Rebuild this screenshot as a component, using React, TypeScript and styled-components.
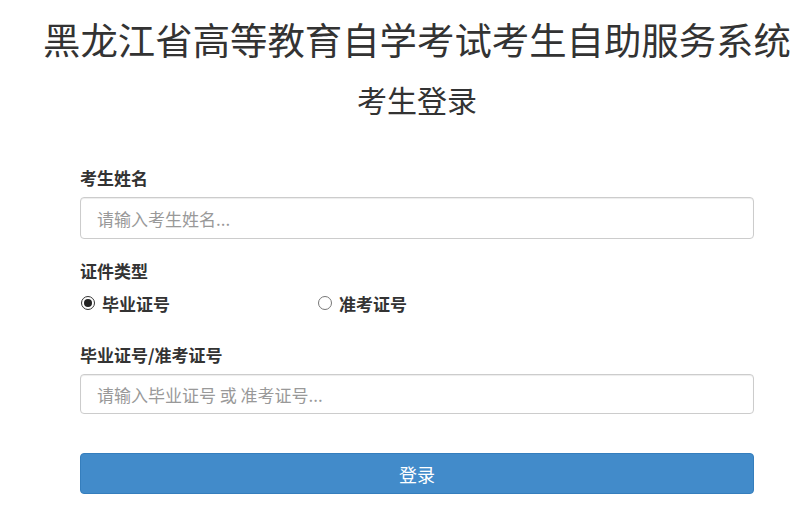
import React, { useState } from "react";
import styled, { createGlobalStyle } from "styled-components";

const GlobalStyle = createGlobalStyle`
  html, body {
    margin: 0;
    padding: 0;
    background: #fff;
  }
  body {
    font-family: "Noto Sans CJK SC", "Noto Sans", "Liberation Sans", sans-serif;
    color: #333;
    font-size: 14px;
  }
  * {
    box-sizing: border-box;
  }
`;

const Page = styled.div`
  display: flex;
  flex-direction: column;
  align-items: center;
  padding: 19px 0 0 34px;
`;

const Title = styled.h1`
  margin: 0;
  font-size: 37.4px;
  font-weight: 400;
  line-height: 40px;
  white-space: nowrap;
`;

const SubTitle = styled.h3`
  margin: 22px 0 0;
  font-size: 30px;
  font-weight: 400;
  line-height: 36px;
`;

const Form = styled.form`
  display: flex;
  flex-direction: column;
  width: 674px;
  margin-top: 49px;
`;

const Label = styled.label<{ $gap?: number }>`
  display: block;
  margin-top: ${(p) => p.$gap ?? 0}px;
  font-size: 17px;
  font-weight: 700;
  line-height: 24px;
`;

const Input = styled.input<{ $h: number }>`
  display: block;
  width: 100%;
  height: ${(p) => p.$h}px;
  margin-top: 7px;
  padding: 0 16px;
  border: 1px solid #ccc;
  border-radius: 4px;
  font-family: inherit;
  font-size: 17px;
  color: #555;
  background: #fff;
  box-shadow: inset 0 1px 1px rgba(0, 0, 0, 0.075);

  &::placeholder {
    color: #999;
  }

  &:focus {
    outline: none;
    border-color: #66afe9;
  }
`;

const RadioRow = styled.div`
  display: flex;
  margin-top: 8px;
  height: 24px;
  align-items: center;
`;

const RadioOption = styled.label`
  display: flex;
  align-items: center;
  width: 237px;
  font-size: 17px;
  font-weight: 700;
  cursor: pointer;
`;

const RadioDot = styled.input`
  appearance: none;
  width: 14px;
  height: 14px;
  margin: 0 7px 0 1px;
  border: 1px solid #777;
  border-radius: 50%;
  background: #fff;
  display: grid;
  place-items: center;

  &:checked {
    border-color: #333;
  }

  &:checked::after {
    content: "";
    width: 8px;
    height: 8px;
    border-radius: 50%;
    background: #222;
  }
`;

const SubmitButton = styled.button`
  height: 41px;
  margin-top: 39px;
  border: 1px solid #357ebd;
  border-radius: 4px;
  background: #428bca;
  color: #fff;
  font-family: inherit;
  font-size: 18px;
  cursor: pointer;

  &:hover {
    background: #3276b1;
  }
`;

const App = () => {
  const [certType, setCertType] = useState("graduate");

  return (
    <>
      <GlobalStyle />
      <Page>
        <Title>黑龙江省高等教育自学考试考生自助服务系统</Title>
        <SubTitle>考生登录</SubTitle>
        <Form onSubmit={(e) => e.preventDefault()}>
          <Label htmlFor="name">考生姓名</Label>
          <Input id="name" $h={42} placeholder="请输入考生姓名..." />

          <Label $gap={20}>证件类型</Label>
          <RadioRow>
            <RadioOption>
              <RadioDot
                type="radio"
                name="certType"
                checked={certType === "graduate"}
                onChange={() => setCertType("graduate")}
              />
              毕业证号
            </RadioOption>
            <RadioOption>
              <RadioDot
                type="radio"
                name="certType"
                checked={certType === "admission"}
                onChange={() => setCertType("admission")}
              />
              准考证号
            </RadioOption>
          </RadioRow>

          <Label htmlFor="certNo" $gap={28}>
            毕业证号/准考证号
          </Label>
          <Input id="certNo" $h={40} placeholder="请输入毕业证号 或 准考证号..." />

          <SubmitButton type="submit">登录</SubmitButton>
        </Form>
      </Page>
    </>
  );
};

export default App;
